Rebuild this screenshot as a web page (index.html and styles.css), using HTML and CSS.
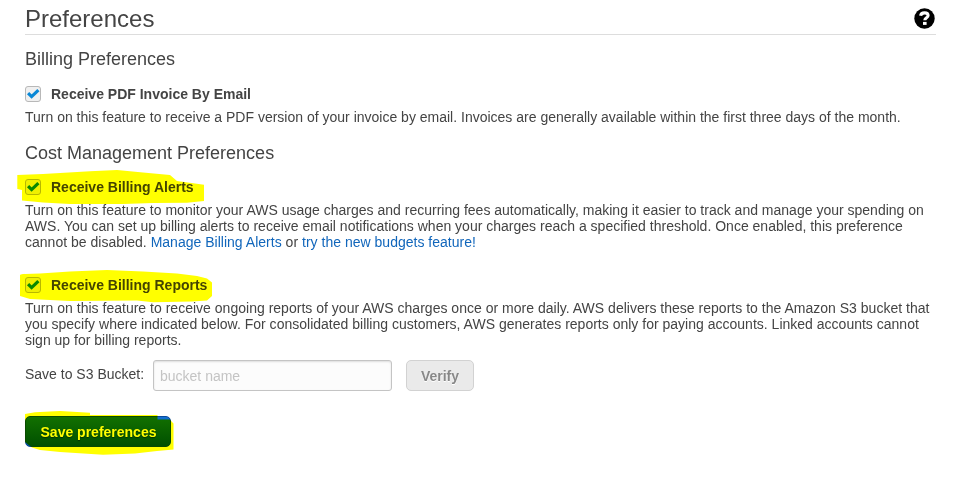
FILE: index.html
```html
<!DOCTYPE html>
<html lang="en">
<head>
<meta charset="utf-8">
<title>Preferences</title>
<link rel="stylesheet" href="styles.css">
</head>
<body>
<main class="page">
  <header class="page-header">
    <h1>Preferences</h1>
    <svg class="help" viewBox="0 0 21 21"><circle cx="10.5" cy="10.5" r="10.2"/><path class="help-hook" d="M6.6 7.8C6.9 5.6 8.4 4.9 10.5 4.9c2.2 0 3.6 1 3.6 2.7 0 2.3-3.2 2.2-3.3 4.7"/><path class="help-dot" d="M9 13.9h3.6v3H9z"/></svg>
  </header>

  <h2 class="billing-title">Billing Preferences</h2>
  <label class="option">
    <span class="check"><svg viewBox="0 0 16 16"><path d="M3.1 7.2 6.6 10.6 13.4 4.1"/></svg></span>
    <span>Receive PDF Invoice By Email</span>
  </label>
  <p>Turn on this feature to receive a PDF version of your invoice by email. Invoices are generally available within the first three days of the month.</p>

  <h2 class="cost-title">Cost Management Preferences</h2>
  <label class="option option-alerts">
    <span class="check"><svg viewBox="0 0 16 16"><path d="M3.1 7.2 6.6 10.6 13.4 4.1"/></svg></span>
    <span>Receive Billing Alerts</span>
    <svg class="marker marker-alerts" viewBox="0 0 190 36"><path d="M.3 5 26 4 73 1.3 100 0l26 2.5L153 5l7 6 27 3.7V31l-17 1.8-34 .2-30 1H53L26 32.5 5 30.5V20L.3 19z"/></svg>
  </label>
  <p>
    <span class="line-alerts">Turn on this feature to monitor your AWS usage charges and recurring fees automatically, making it easier to track and manage your spending on</span><br>
    <span class="line-alerts">AWS. You can set up billing alerts to receive email notifications when your charges reach a specified threshold. Once enabled, this preference</span><br>
    <span class="line-links">cannot be disabled. <a href="#">Manage Billing Alerts</a> or <a href="#">try the new budgets feature!</a></span>
  </p>

  <label class="option option-reports">
    <span class="check"><svg viewBox="0 0 16 16"><path d="M3.1 7.2 6.6 10.6 13.4 4.1"/></svg></span>
    <span>Receive Billing Reports</span>
    <svg class="marker marker-reports" viewBox="0 0 194 34"><path d="M0 5.5Q0 4 3 4L20 3.5 50 1.5 87 0l36 1.5L157 3.5l20 2.5 10 2.5 5 4V26l-5 4.5-15 1-39 .7-16-1.7-67 .5L10 29 0 26z"/></svg>
  </label>
  <p>
    <span class="line-reports">Turn on this feature to receive ongoing reports of your AWS charges once or more daily. AWS delivers these reports to the Amazon S3 bucket that</span><br>
    <span class="line-linked">you specify where indicated below. For consolidated billing customers, AWS generates reports only for paying accounts. Linked accounts cannot</span><br>
    sign up for billing reports.
  </p>

  <div class="bucket-row">
    <label class="bucket-label" for="bucket">Save to S3 Bucket:</label>
    <input id="bucket" type="text" placeholder="bucket name">
    <button class="verify" disabled>Verify</button>
  </div>

  <div class="save-row">
    <button class="save">Save preferences</button>
    <svg class="marker marker-save" viewBox="0 0 150 46"><path d="M0 3 10 1.2 35 0l30 1.7V4h67.5v4.5H145l2 2.5 1.5 1.5V38.5L132 40l-22 2.5L78 43.7 35 41 15 39 7 36.5 0 31z"/></svg>
  </div>
</main>
</body>
</html>
```
FILE: styles.css
```css
* { box-sizing: border-box; }
html { background: #fff; }
body {
  margin: 0;
  min-height: 100vh;
  background: #fff;
  color: #444;
  font: 14px/16px "Liberation Sans", Arial, sans-serif;
  overflow: hidden;
}
.page { width: 936px; min-height: 100vh; padding-left: 25px; white-space: nowrap; }
.page-header {
  display: flex;
  justify-content: space-between;
  height: 35px;
  border-bottom: 1px solid #ddd;
}
h1 { margin: 4px 0 0; font-size: 24px; line-height: 30px; font-weight: 400; }
h2 { margin: 0; font-size: 18px; line-height: 22px; font-weight: 400; }
.billing-title { margin-top: 13px; }
.cost-title { margin-top: 17px; }
.help { width: 21px; height: 21px; margin: 8px 1px 0 0; }
.help-hook { fill: none; stroke: #fff; stroke-width: 3.1; }
.help-dot { fill: #fff; }
.option {
  position: relative;
  display: flex;
  align-items: center;
  gap: 10px;
  height: 16px;
  margin: 16px 0 7px;
  font-weight: 700;
}
.option-alerts { margin-top: 15px; }
.option-reports { margin-top: 27px; }
.check {
  width: 16px;
  height: 16px;
  border: 1px solid #b8b8b8;
  border-radius: 3px;
  background: #f0f0f0;
}
.check svg { display: block; width: 16px; height: 16px; margin: -1px; }
.check path { fill: none; stroke: #0a88d6; stroke-width: 3.2; }
p { margin: 0; }
.line-alerts { letter-spacing: 0.004px; }
.line-links { letter-spacing: 0.015px; }
.line-reports { letter-spacing: 0.014px; }
.line-linked { letter-spacing: 0.007px; }
a { color: #1166bb; text-decoration: none; }
.marker {
  position: absolute;
  fill: #ff0;
  mix-blend-mode: multiply;
  pointer-events: none;
}
.marker-alerts { left: -8px; top: -9px; width: 190px; height: 36px; }
.marker-reports { left: -5px; top: -7px; width: 194px; height: 34px; }
.marker-save { left: 0; top: -5px; width: 150px; height: 46px; }
.bucket-row { display: flex; height: 31px; margin-top: 12px; }
.bucket-label { width: 128px; padding-top: 6px; }
#bucket {
  width: 239px;
  height: 31px;
  margin: 0 14px 0 0;
  padding: 0 6px;
  border: 1px solid #c4c4c4;
  border-radius: 3px;
  background: #fcfcfc;
  box-shadow: inset 0 1px 2px #ddd;
  font: inherit;
}
#bucket::placeholder { color: #c4c4c4; opacity: 1; }
button {
  height: 31px;
  padding: 0;
  border-radius: 5px;
  font: 700 14px/16px "Liberation Sans", Arial, sans-serif;
}
.verify {
  width: 68px;
  border: 1px solid #d2d2d2;
  background: #eaeaea;
  color: #888;
  text-shadow: 0 1px 0 #fff;
}
.save-row { position: relative; height: 31px; margin-top: 25px; }
.save {
  display: block;
  width: 146px;
  padding-left: 1px;
  border: 1px solid #0a4a9c;
  background: linear-gradient(#1270d0, #0050a0);
  color: #fff;
  text-shadow: 0 1px 1px #003060;
}
```
